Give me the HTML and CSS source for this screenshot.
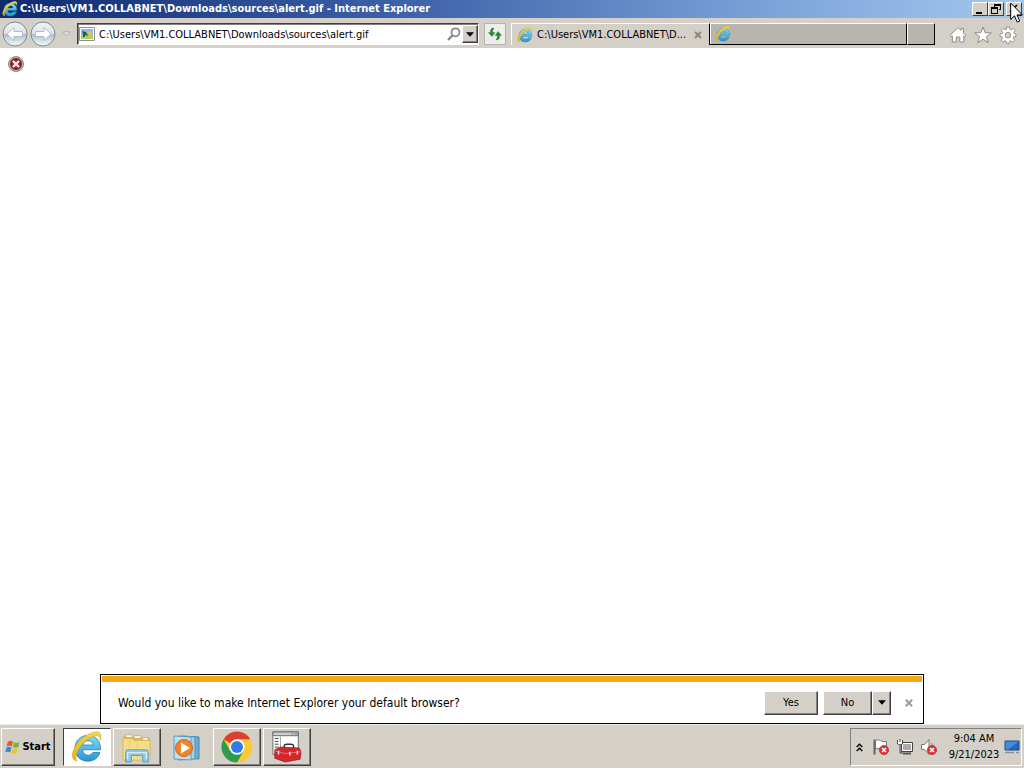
FILE: index.html
```html
<!DOCTYPE html>
<html lang="en">
<head>
<meta charset="utf-8">
<title>C:\Users\VM1.COLLABNET\Downloads\sources\alert.gif - Internet Explorer</title>
<link rel="stylesheet" href="styles.css">
</head>
<body>
<svg class="defs" aria-hidden="true">
  <defs>
    <linearGradient id="blue" x1="0" y1="0" x2="0" y2="1"><stop offset="0" stop-color="#7fdcf8"/><stop offset="1" stop-color="#2a93d2"/></linearGradient>
    <linearGradient id="gold" x1="0" y1="1" x2="1" y2="0"><stop offset="0" stop-color="#e9b51c"/><stop offset="1" stop-color="#f7d74e"/></linearGradient>
    <linearGradient id="orb" x1="0" y1="0" x2="0" y2="1"><stop offset="0" stop-color="#f2f4f6"/><stop offset=".48" stop-color="#dde3e9"/><stop offset=".52" stop-color="#b4bfc9"/><stop offset="1" stop-color="#f2fdff"/></linearGradient>
    <symbol id="ie" viewBox="0 0 32 32">
      <path d="M29.500 18.800H11.600c.3 3.400 2.400 5.400 5.500 5.400 2.200 0 3.900-1 4.700-2.700h7.100c-1.500 5.400-6 8.700-11.900 8.700C9.400 30.200 4 25 4 17.400S9.400 4.400 17 4.400c7.700 0 13 5.500 12.500 14.400zM22.300 14c-.4-2.700-2.300-4.300-5.200-4.300s-4.900 1.600-5.400 4.300z" fill="url(#blue)" stroke="#2580a5" stroke-width=".8"/>
      <path d="M6 30C-1.500 29.500.5 19 7.500 11 14 3.800 24-.8 28 1.200c2.500 1.300 2.500 4.800 1 8.300.2-3.500-1.200-4.700-4-4.500-5 .4-12 5-16 11-3.500 5.200-5.200 11-3 14z" fill="url(#gold)" stroke="#bd9a25" stroke-width=".4"/>
    </symbol>
    <symbol id="badge" viewBox="0 0 10 10"><circle cx="5" cy="5" r="4.600" fill="#d8343a" stroke="#b5272b" stroke-width=".7"/><path d="M3 3l4 4M7 3L3 7" stroke="#fff" stroke-width="1.600"/></symbol>
  </defs>
</svg>

<header class="titlebar">
  <svg class="icon16"><use href="#ie"/></svg>
  <h1 class="title">C:\Users\VM1.COLLABNET\Downloads\sources\alert.gif - Internet Explorer</h1>
  <div class="window-controls">
    <button class="win-button" aria-label="Minimize"><svg viewBox="0 0 14 12"><path d="M3 9h6v2H3z"/></svg></button>
    <button class="win-button" aria-label="Restore"><svg viewBox="0 0 14 12"><path d="M5 1h7v6h-2V6h1V3H6v1H5zM2 4h7v7H2zM3 6v4h5V6z" fill-rule="evenodd"/></svg></button>
    <button class="win-button close" aria-label="Close"><svg viewBox="0 0 14 12"><path d="M3 2l7 7M10 2L3 9" stroke="#000" stroke-width="1.600"/></svg></button>
  </div>
</header>

<nav class="toolbar">
  <div class="history">
    <button class="orb" aria-label="Back"><svg viewBox="0 0 26 26"><circle cx="13" cy="13" r="12" fill="url(#orb)" stroke="#7f8a94"/><path d="M5 13l7-6.500v4h8.500v5H12v4z" fill="#fff" stroke="#a3afba" stroke-width=".8"/></svg></button>
    <button class="orb" aria-label="Forward"><svg viewBox="0 0 26 26"><circle cx="13" cy="13" r="12" fill="url(#orb)" stroke="#7f8a94"/><path d="M21 13l-7-6.500v4H5.500v5H14v4z" fill="#fff" stroke="#a3afba" stroke-width=".8"/></svg></button>
    <button class="recent" aria-label="Recent pages"><svg viewBox="0 0 9 6"><path d="M1 .8h7L4.500 5z" fill="#e8e6e1" stroke="#aaa69e" stroke-width=".8"/></svg></button>
  </div>
  <form class="address">
    <svg class="page-icon" viewBox="0 0 16 14"><path d="M.5.5h15v13H.5z" fill="#fff" stroke="#8b9299"/><path d="M2 2h12v10H2z" fill="#8fb9ee"/><path d="M2 10l3-2 3 2 3-2 3 1v3H2z" fill="#b5cf4c"/><path d="M3 4l4 1 2 4-3-1v2H4V7z" fill="#286424"/><path d="M9 5l4-1v4l-3 1z" fill="#d2d04a"/></svg>
    <input class="url" aria-label="Address" value="C:\Users\VM1.COLLABNET\Downloads\sources\alert.gif">
    <button class="search" type="button" aria-label="Search"><svg viewBox="0 0 14 14"><circle cx="8.500" cy="5.300" r="4" fill="none" stroke="#858585" stroke-width="1.700"/><path d="M5.700 8.300L1 13" stroke="#858585" stroke-width="2.200"/></svg></button>
    <button class="raised drop" type="button" aria-label="Show address history"><svg viewBox="0 0 7 4"><path d="M0 0h7L3.500 4z"/></svg></button>
  </form>
  <button class="refresh" aria-label="Refresh"><svg viewBox="0 0 16 14"><path d="M7 1C4 1 3 3 3.500 5.500H1.300L5 9.500l3-4H5.700C5.500 4 6 2.500 7 1z" fill="#2f8136" stroke="#1c6c28" stroke-width=".3"/><path d="M9 13c3 0 4-2 3.500-4.500h2.200L11 4.500l-3 4h2.300c.2 1.500-.3 3-1.300 4.500z" fill="#2f8136" stroke="#1c6c28" stroke-width=".3"/></svg></button>
  <div class="tabs">
    <div class="tab active"><svg class="icon16"><use href="#ie"/></svg><span class="tab-title">C:\Users\VM1.COLLABNET\D...</span><button class="tab-close" aria-label="Close tab"><svg viewBox="0 0 8 8"><path d="M1 1l6 6M7 1L1 7" stroke="#898681" stroke-width="2"/></svg></button></div>
    <div class="tab inactive"><svg class="icon16"><use href="#ie"/></svg></div>
    <button class="new-tab" aria-label="New tab"></button>
  </div>
  <div class="tools">
    <button class="tool" aria-label="Home"><svg viewBox="0 0 18 18"><path d="M9 1.500l3 3v-2h2.500v4.600L17 9.500l-1.200 1.200-1-.8V16h-4v-5H7.300v5h-4V9.900l-1 .8L1 9.500z" fill="#fff" stroke="#8c8984"/></svg></button>
    <button class="tool" aria-label="Favorites"><svg viewBox="0 0 18 18"><path d="M9 1l2.200 5.700 6.100.2-4.800 3.800 1.700 6L9 13.300l-5.200 3.400 1.700-6L.7 6.900l6.100-.2z" fill="#fff" stroke="#8c8984"/></svg></button>
    <button class="tool" aria-label="Tools"><svg viewBox="0 0 18 18"><path fill-rule="evenodd" d="M7.500 1h3l.4 2.300 1.300.5 2-1.400 2 2-1.300 2 .5 1.200L17 8v2.500l-2.100.4-.5 1.300 1.300 2-2 1.900-2-1.300-1.200.5-.4 2.200H7.700l-.4-2.200-1.300-.5-2 1.300-1.900-1.900 1.300-2-.5-1.300L1 10.500V8l2.200-.4.5-1.200-1.400-2 2-2 1.900 1.400 1.200-.5zM9 6.400a2.800 2.800 0 100 5.600 2.800 2.800 0 000-5.600z" fill="#fff" stroke="#8c8984" stroke-width=".9"/></svg></button>
  </div>
</nav>

<main class="page">
  <svg class="alert" role="img" aria-label="Alert" viewBox="0 0 16 16"><circle cx="8" cy="8" r="7.500" fill="#c9c5c1" stroke="#77706c" stroke-width=".8"/><circle cx="8" cy="8" r="5.700" fill="#a71f20" stroke="#702020" stroke-width=".8"/><path d="M5 5l6 6M11 5l-6 6" stroke="#fff" stroke-width="2.200"/></svg>
  <section class="prompt" aria-label="Default browser">
    <div class="stripe"></div>
    <div class="prompt-row">
      <p class="question">Would you like to make Internet Explorer your default browser?</p>
      <button class="raised choice">Yes</button>
      <div class="split"><button class="raised choice no">No</button><button class="raised more" aria-label="More options"><svg viewBox="0 0 7 4"><path d="M0 0h7L3.500 4z"/></svg></button></div>
      <button class="dismiss" aria-label="Dismiss"><svg viewBox="0 0 8 8"><path d="M.8.8l6.400 6.400M7.200.8L.8 7.200" stroke="#9c9c9c" stroke-width="2"/></svg></button>
    </div>
  </section>
</main>

<footer class="taskbar">
  <button class="raised start"><svg viewBox="0 0 16 16"><path d="M3 2.500Q5.500 1 8 2.500L6.800 7.600Q4.300 6 1.600 7.300z" fill="#e65a28"/><path d="M9 2.900q2.500 1.600 5.500.3L13.200 8.100q-2.600 1.400-5.300-.1z" fill="#76b63c"/><path d="M1.400 8.400q2.500-1.200 5.100.3L5.300 13.500Q3 12 .2 13.200z" fill="#3c8dd0"/><path d="M7.600 9.200q2.600 1.400 5.300.1l-1.300 4.700q-2.600 1.400-5.300-.1z" fill="#f5c226"/></svg>Start</button>
  <div class="apps">
    <button class="app current" aria-label="Internet Explorer"><svg viewBox="0 0 32 32"><use href="#ie"/></svg></button>
    <button class="app raised" aria-label="File Explorer"><svg viewBox="0 0 34 34"><path d="M2 5h9l2 2h18v21H2z" fill="#dfbd61"/><path d="M5 4h7v3H5zM14 5h7v3h-7zM23 7h6v3h-6z" fill="#fff7d6" stroke="#9a8550" stroke-width=".5"/><path d="M2 8h10l2 2h17v21H2z" fill="#f4dd89" stroke="#d8b757"/><path d="M17 10v19M9 9v20" stroke="#ead074"/><path d="M5 33V22q0-2 2-2h20q2 0 2 2v11h-6v-7H11v7z" fill="#91c6e9" stroke="#5c9ac9"/><path d="M7 30v-7h20v7" fill="none" stroke="#d6effc" stroke-width="1.500"/></svg></button>
    <button class="app plain" aria-label="Media Player"><svg viewBox="0 0 32 32"><path d="M11 5l17 1v22l-17-1z" fill="#6daed2" stroke="#4385af"/><path d="M7 5l17 1v22L7 29z" fill="#a4d3e9" stroke="#558fb6"/><path d="M3 5l17 1v23L3 28z" fill="#bde0ef" stroke="#629abc"/><circle cx="13" cy="17" r="8.500" fill="#f0852c" stroke="#d26419"/><path d="M10 11.500l9 5.500-9 5.500z" fill="#fff"/></svg></button>
    <button class="app raised" aria-label="Chrome"><svg viewBox="0 0 32 32"><circle cx="16" cy="16" r="15.500" fill="#fbc934"/><path d="M16 16L2.600 8.200A15.500 15.500 0 0129.400 8.200H16z" fill="#dc3e32"/><path d="M2.600 8.200A15.500 15.500 0 0016 31.500L22.700 20 9.300 20z" fill="#2d9c50"/><circle cx="16" cy="16" r="7.700" fill="#fff"/><circle cx="16" cy="16" r="6" fill="#347be5"/></svg></button>
    <button class="app raised" aria-label="Server tools"><svg viewBox="0 0 34 34"><path d="M2 1h27v24H2z" fill="#fff" stroke="#62666a"/><path d="M2 1h27v4H2z" fill="#c9cdd0" stroke="#62666a"/><path d="M22 3h1M25 3h1M27 3h1M4 8h4M4 11h4M4 14h4M4 17h4" stroke="#34383c"/><path d="M10 6v18" stroke="#999"/><path d="M14 19v-3q0-2 3-2h4q3 0 3 2v3" fill="none" stroke="#333" stroke-width="1.500"/><path d="M4 20l6-3 20 1 2 4-1 8-16 3-11-4z" fill="#d3272c" stroke="#861a1d" stroke-width=".7"/><path d="M4 21l11 3 17-2" fill="none" stroke="#f17375"/><path d="M8 21v4M20 22v4M28 21v4" stroke="#eee" stroke-width="1.500"/></svg></button>
  </div>
  <div class="tray">
    <button class="tray-icon chevrons" aria-label="Show hidden icons"><svg viewBox="0 0 7 9"><path d="M.7 4L3.500 1.200 6.300 4M.7 8l2.800-2.800L6.300 8" fill="none" stroke="#000" stroke-width="1.400"/></svg></button>
    <button class="tray-icon" aria-label="Action Center"><svg viewBox="0 0 18 18"><path d="M2.500 1.500v15" stroke="#666" stroke-width="2"/><path d="M3.500 2.500q3-1.500 5 0t6 1v8q-4 1-6-.5t-5 0z" fill="#fff" stroke="#777"/><use href="#badge" x="7" y="7" width="10" height="10"/></svg></button>
    <button class="tray-icon" aria-label="Network"><svg viewBox="0 0 18 18"><path d="M5.500 4.500h11v9h-11z" fill="#aaa" stroke="#444"/><path d="M6.500 5.500h9v7h-9z" fill="none" stroke="#fff"/><path d="M7 15.500h8" stroke="#555" stroke-width="2"/><path d="M1.500 2v4h5V2M4 6v9h3" fill="none" stroke="#444"/><path d="M2 2h4v4H2z" fill="#fff"/><path d="M4 1v3" stroke="#444"/></svg></button>
    <button class="tray-icon" aria-label="Volume"><svg viewBox="0 0 18 18"><path d="M1.500 6.500h3l4.500-5v15l-4.500-5h-3z" fill="#fff" stroke="#777"/><path d="M11.500 5q1.500 2 1 5" fill="none" stroke="#888"/><use href="#badge" x="7" y="7" width="10" height="10"/></svg></button>
    <time class="clock" datetime="2023-09-21T09:04"><span>9:04 AM</span><span>9/21/2023</span></time>
    <button class="desktop" aria-label="Show desktop"><svg viewBox="0 0 16 14"><path d="M1 1h14v9H1z" fill="#2768bd" stroke="#194784"/><path d="M1.500 1.500h13L4 9.500H1.500z" fill="#438cd9"/><path d="M1 12.500h9M12 12.500h3" stroke="#7c93aa" stroke-width="1.500"/></svg></button>
  </div>
</footer>
<svg class="cursor" viewBox="0 0 13 21" aria-hidden="true"><path d="M.7 1v16.500l3.800-3.700 2.700 6.300 2.500-1.100L7 12.900h5.300z" fill="#fff" stroke="#000"/></svg>
</body>
</html>
```
FILE: styles.css
```css
* { box-sizing: border-box; }
body {
  margin: 0;
  min-height: 100vh;
  display: flex;
  flex-direction: column;
  background: #fff;
  color: #000;
  font: 11px/14px "DejaVu Sans Condensed", "DejaVu Sans", sans-serif;
}
button { margin: 0; padding: 0; border: 0; background: none; color: inherit; font: inherit; }
svg { display: block; flex: none; }
.defs { position: absolute; width: 0; height: 0; }
.icon16 { width: 16px; height: 16px; }

.titlebar {
  display: flex;
  align-items: center;
  gap: 2px;
  height: 18px;
  padding: 0 2px;
  background: linear-gradient(90deg, #0e2a70, #3f62aa 40%, #7ba3d8 75%, #a3c8ef);
}
.title { flex: 1; margin: 0; color: #fff; font-size: 11px; line-height: 18px; font-weight: bold; white-space: nowrap; }
.window-controls { display: flex; }
.win-button {
  width: 16px;
  height: 14px;
  background: #d4d0c8;
  border: 1px solid;
  border-color: #fff #404040 #404040 #fff;
}
.win-button svg { width: 14px; height: 12px; }
.close { margin-left: 2px; }

.toolbar { display: flex; align-items: center; height: 30px; padding: 2px 7px 0 0; background: #d4d0c8; }
.history { display: flex; align-items: center; width: 77px; padding-left: 2px; gap: 2px; }
.orb { width: 26px; height: 26px; border-radius: 50%; }
.orb svg { width: 26px; height: 26px; }
.recent { padding: 4px; }
.recent svg { width: 9px; height: 6px; }
.address {
  display: flex;
  align-items: center;
  flex: 401 1 0;
  height: 22px;
  padding-left: 1px;
  background: #fff;
  border: 1px solid;
  border-color: #404040 #fff #fff #404040;
  box-shadow: inset 1px 1px #808080;
}
.page-icon { width: 16px; height: 14px; }
.url { flex: 1; min-width: 0; height: 18px; margin: 0; padding: 0 4px; border: 0; background: none; font: inherit; color: #000; }
.search { padding: 0 1px; }
.search svg { width: 14px; height: 14px; }
.raised {
  display: flex;
  align-items: center;
  justify-content: center;
  background: #d4d0c8;
  border: 1px solid;
  border-color: #fff #404040 #404040 #fff;
  box-shadow: inset -1px -1px #808080;
}
.drop { width: 16px; height: 18px; }
.drop svg, .more svg { width: 8px; height: 5px; }
.refresh { display: flex; align-items: center; justify-content: center; width: 22px; height: 22px; margin: 0 5px; background: #eceeec; border: 1px solid #b8b5ae; }
.refresh svg { width: 16px; height: 14px; }
.tabs { display: flex; flex: 426 1 0; height: 22px; min-width: 0; }
.tab { display: flex; align-items: center; gap: 4px; flex: 1; min-width: 0; padding: 0 6px 0 5px; }
.active { border-top: 1px solid #fff; border-left: 1px solid #fff; }
.tab-title { flex: 1; overflow: hidden; white-space: nowrap; }
.tab-close { padding: 1px; }
.tab-close svg { width: 8px; height: 8px; }
.inactive { background: #b9b5ae; border: 1px solid; border-color: #fff #000 #000 #000; box-shadow: inset 1px 0 #fff; }
.new-tab { width: 28px; background: #b9b5ae; border: 1px solid; border-color: #fff #000 #000 #fff; }
.tools { display: flex; gap: 7px; margin-left: 14px; padding-top: 2px; }
.tool svg { width: 18px; height: 18px; }

.page { flex: 1; display: flex; flex-direction: column; justify-content: space-between; padding-top: 8px; }
.alert { width: 16px; height: 16px; margin-left: 8px; }
.prompt { margin: 0 100px; border: 1px solid #000; background: #fff; }
.stripe { height: 6px; margin: 1px 1px 0; background: #f3aa10; }
.prompt-row { display: flex; align-items: center; height: 41px; padding: 0 10px 0 17px; }
.question { flex: 1; margin: 0; font-size: 12px; line-height: 16px; }
.choice { width: 54px; height: 24px; }
.split { display: flex; margin: 0 14px 0 5px; }
.no { width: 49px; }
.more { width: 19px; }
.dismiss svg { width: 8px; height: 8px; }

.taskbar { display: flex; align-items: center; height: 44px; padding: 2px 2px 0 1px; background: #d4d0c8; box-shadow: inset 0 1px #eeece8; }
.start { gap: 1px; width: 54px; height: 38px; font-weight: bold; }
.start svg { width: 16px; height: 16px; }
.apps { display: flex; flex: 1; gap: 2px; padding-left: 8px; }
.app { display: flex; align-items: center; justify-content: center; width: 48px; height: 38px; }
.app svg { width: 32px; height: 32px; }
.app.current { background: #fff; border: 1px solid; border-color: #404040 #fff #fff #404040; }
.tray { display: flex; align-items: center; height: 38px; padding: 0 1px 0 5px; border: 1px solid; border-color: #808080 #fff #fff #808080; }
.tray-icon { margin-right: 6px; }
.tray-icon svg { width: 18px; height: 18px; }
.chevrons { padding-right: 3px; }
.chevrons svg { width: 7px; height: 9px; }
.clock { display: flex; flex-direction: column; align-items: center; width: 60px; line-height: 16px; }
.desktop svg { width: 16px; height: 14px; }

.cursor { position: absolute; top: 2px; right: 1px; width: 13px; height: 21px; }
```
